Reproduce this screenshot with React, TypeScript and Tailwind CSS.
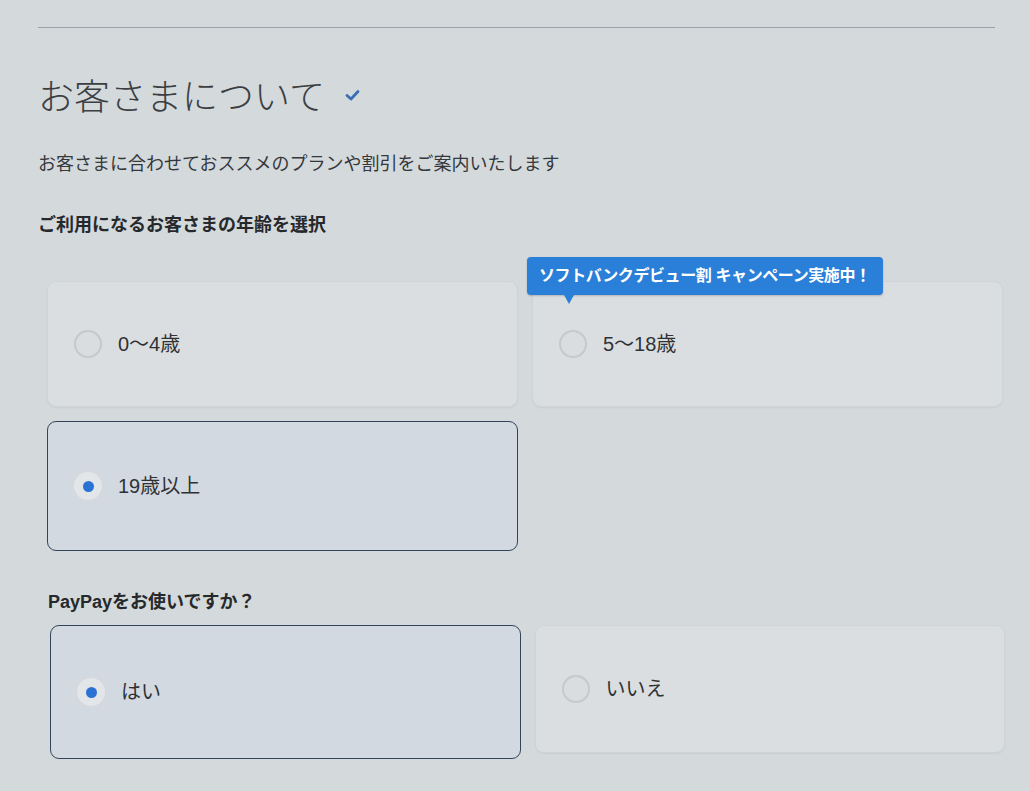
import React from "react";

const FONT = { fontFamily: '"Liberation Sans", "Noto Sans CJK JP", sans-serif' };

function Radio({ checked }: { checked: boolean }) {
  return checked ? (
    <span className="flex h-[28px] w-[28px] shrink-0 items-center justify-center rounded-full bg-[#e3e6e9] shadow-[0_0_0_1px_#d4d8db]">
      <span className="h-[11px] w-[11px] rounded-full bg-[#2a72d3]" />
    </span>
  ) : (
    <span className="h-[28px] w-[28px] shrink-0 rounded-full border-2 border-[#c5c9cc] bg-[#dadde0]" />
  );
}

function Card({
  label,
  checked,
  h,
  children,
}: {
  label: string;
  checked: boolean;
  h: string;
  children?: React.ReactNode;
}) {
  return (
    <div
      className={
        "relative flex items-center gap-[16px] rounded-[9px] pl-[26px] " +
        h +
        " " +
        (checked
          ? "border-[1.5px] border-[#34455b] bg-[#d2d9e0]"
          : "border border-[#d0d4d7] bg-[#dbdee1] shadow-[0_1px_2px_rgba(0,0,0,0.05)]")
      }
    >
      {children}
      <Radio checked={checked} />
      <span className="text-[20px] text-[#2f3235]">{label}</span>
    </div>
  );
}

export default function App() {
  return (
    <div
      className="h-[791px] w-full overflow-hidden bg-[#d4d9dc] pt-[27px]"
      style={FONT}
    >
      <div className="ml-[38px] mr-[35px] border-t border-[#9aa0a5]" />
      <div className="pl-[38px]">
        <div className="mt-[42px] flex items-center gap-[20px]">
          <h1
            className="text-[36px] font-light leading-[48px] text-[#3b3f43]"
            style={{ fontFamily: '"Noto Sans CJK JP", sans-serif' }}
          >
            お客さまについて
          </h1>
          <svg width="15" height="13" viewBox="0 0 15 13" className="mt-[2px]">
            <path
              d="M2 6.5 L6 10 L13 2.5"
              fill="none"
              stroke="#3a6db3"
              strokeWidth="2.8"
              strokeLinecap="round"
              strokeLinejoin="round"
            />
          </svg>
        </div>
        <p className="mt-[33px] text-[18px] leading-[26px] text-[#35383b]">
          お客さまに合わせておススメのプランや割引をご案内いたします
        </p>
        <p className="mt-[35px] text-[18px] font-bold leading-[26px] text-[#26292c]">
          ご利用になるお客さまの年齢を選択
        </p>
      </div>

      <div className="ml-[47px] mr-[27px] mt-[43px] grid grid-cols-2 gap-x-[14px] gap-y-[14px]">
        <Card label="0〜4歳" checked={false} h="h-[126px]" />
        <Card label="5〜18歳" checked={false} h="h-[126px]">
          <div className="absolute left-[-6px] top-[-25px] z-10">
            <div className="flex h-[38px] items-center rounded-[4px] bg-[#2a7fd8] px-[12px] text-[16px] font-bold tracking-[-0.4px] text-white shadow-[0_1px_2px_rgba(0,0,0,0.2)]">
              ソフトバンクデビュー割 キャンペーン実施中！
            </div>
            <div className="ml-[37px] h-0 w-0 border-l-[5px] border-r-[5px] border-t-[9px] border-l-transparent border-r-transparent border-t-[#2a7fd8]" />
          </div>
        </Card>
        <Card label="19歳以上" checked={true} h="h-[130px]" />
      </div>

      <p className="ml-[48px] mt-[38px] text-[18px] font-bold leading-[26px] text-[#26292c]">
        PayPayをお使いですか？
      </p>

      <div className="ml-[50px] mr-[25px] mt-[10px] grid grid-cols-2 gap-x-[14px]">
        <Card label="はい" checked={true} h="h-[134px]" />
        <Card label="いいえ" checked={false} h="h-[128px]" />
      </div>
    </div>
  );
}
